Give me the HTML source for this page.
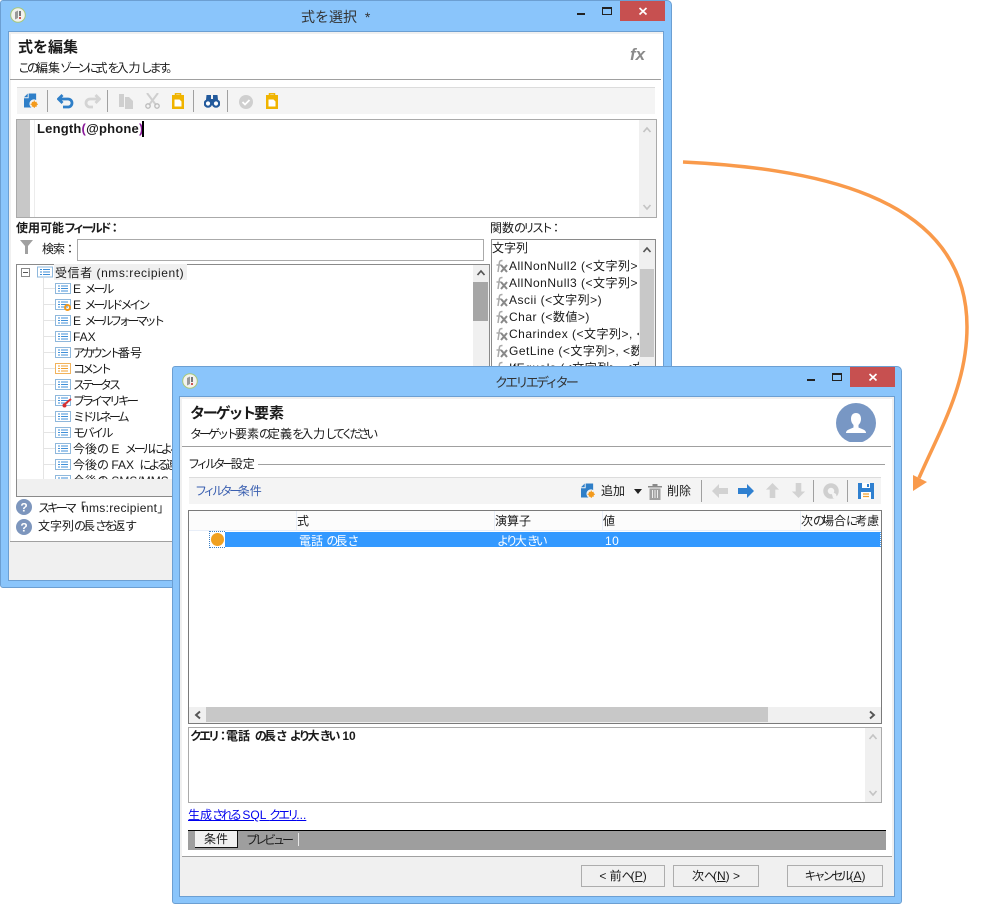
<!DOCTYPE html>
<html lang="ja"><head><meta charset="utf-8">
<style>
html,body{margin:0;padding:0;background:#fff;width:990px;height:914px;overflow:hidden}
body{position:relative;font-family:"Liberation Sans","Noto Sans CJK JP",sans-serif;font-size:12px;color:#1a1a1a}
div,svg{position:absolute;box-sizing:border-box}
.t{white-space:nowrap;line-height:16px;height:16px}
.b{font-weight:bold}
u{text-decoration:underline}
.win{background:#8ac5fb;border:1px solid #6c9fd2;border-radius:3px 5px 3px 3px}
.client{background:#fff;border:1px solid #6c9fd2;overflow:hidden}
.hr{height:1px;background:#a0a0a0}
.sep{width:1px;height:22px;background:#a0a0a0}
.tb{background:#f4f4f4;border-top:1px solid #dcdcdc}
.btn{background:#f0f0f0;border:1px solid #adadad;text-align:center;line-height:20px;height:22px;white-space:nowrap}
.k{letter-spacing:-3px}
.l{letter-spacing:.5px}
</style></head><body>
<svg width="0" height="0" style="position:absolute">
<defs>
<symbol id="li" viewBox="0 0 16 11"><rect x=".5" y=".5" width="15" height="10" fill="#fff" stroke="#8fb8dc"/><path d="M3 3h2M3 5.500h2M3 8h2M6 3h7M6 5.500h7M6 8h7" stroke="#3f8fd8" fill="none"/></symbol>
<symbol id="lo" viewBox="0 0 16 11"><rect x=".5" y=".5" width="15" height="10" fill="#fff" stroke="#f2b35c"/><path d="M3 3h2M3 5.500h2M3 8h2M6 3h7M6 5.500h7M6 8h7" stroke="#f0a030" fill="none"/></symbol>
<symbol id="add" viewBox="0 0 15 16"><path d="M5 0h8v7a4.500 4.500 0 0 0-5 8H0V5h5z" fill="#2f7fc8"/><path d="M4 0v4H0z" fill="#2f7fc8"/><circle cx="11" cy="11.500" r="3" fill="#f39a1c"/><path d="M11 7.500v8M7 11.500h8M8.500 9l5 5M13.500 9l-5 5" stroke="#f39a1c"/></symbol>
<symbol id="paste" viewBox="0 0 12 16"><rect y="2" width="12" height="14" fill="#f0b400"/><rect x="3.500" y=".8" width="5" height="4" fill="none" stroke="#f0b400" stroke-width="1.500"/><path d="M2.500 6.500h5l2 2v5h-7z" fill="#fff"/></symbol>
<symbol id="arr" viewBox="0 0 16 14"><path d="M0 7L7 0v4h9v6H7v4z" fill="currentColor"/></symbol>
<symbol id="q" viewBox="0 0 16 16"><circle cx="8" cy="8" r="8" fill="#7d96bd"/><text x="8" y="12.500" text-anchor="middle" font-family="Liberation Sans" font-weight="bold" font-size="12" fill="#fff">?</text></symbol>
<symbol id="fx" viewBox="0 0 14 14"><path d="M4 13L5.500 3c.2-1 1-1.500 3-1.500M2.500 6H7" stroke="#aaa" stroke-width="1.500" fill="none"/><path d="M7 6l6 7M13 6l-6 7" stroke="#888" stroke-width="2" fill="none"/></symbol>
<symbol id="appi" viewBox="0 0 16 16"><circle cx="8" cy="8" r="7.300" fill="#f2f2ee" stroke="#a8c878"/><path d="M5 5l3-1.500V11l-3 1.500z" fill="#999"/><path d="M9 4h2v5H9z" fill="#777"/><path d="M9 10h2v2H9z" fill="#c55"/></symbol>
</defs></svg>

<!-- WINDOW 1 -->
<div class="win" style="left:0;top:0;width:672px;height:588px"></div>
<div class="t" style="left:301px;top:9px;font-size:14px;color:#333;word-spacing:4px">式を選択 *</div>
<svg style="left:10px;top:7px" width="16" height="16"><use href="#appi"/></svg>
<div style="left:577px;top:13px;width:8px;height:2px;background:#222"></div>
<div style="left:602px;top:7px;width:10px;height:8px;border:1px solid #222;border-top-width:2px"></div>
<div style="left:620px;top:1px;width:45px;height:20px;background:#c75050"></div>
<svg style="left:638px;top:6px" width="10" height="10"><path d="M1.500 2l7 6.500M8.500 2l-7 6.500" stroke="#fff" stroke-width="1.700"/></svg>

<div class="client" style="left:8px;top:31px;width:656px;height:550px;background:#fff;border-color:#6c9fd2">
<div style="left:0;top:0;width:654px;height:2px;background:#f0f0f0"></div>
<div style="left:0;top:0;width:2px;height:548px;background:#f0f0f0"></div>
</div>
<div class="t b" style="left:18px;top:40px;font-size:15px">式を編集</div>
<div class="t" style="left:18px;top:60px"><span class="k">この</span>編集<span class="k">ゾーンに</span>式<span class="k">を</span>入力<span class="k">します。</span></div>
<div class="t" style="left:630px;top:47px;font-style:italic;font-weight:bold;font-size:17px;color:#8a8a8a">fx</div>
<div class="hr" style="left:10px;top:79px;width:651px"></div>

<div class="tb" style="left:17px;top:87px;width:638px;height:27px"></div>
<svg style="left:24px;top:93px" width="14" height="16"><use href="#add"/></svg>
<div class="sep" style="left:47px;top:90px"></div>
<svg style="left:57px;top:94px" width="18" height="15"><path d="M5.500 1L1.500 5l4 4M2 5h9a4 4 0 0 1 0 8H6" fill="none" stroke="#2f7fc8" stroke-width="2.800"/></svg>
<svg style="left:83px;top:94px" width="18" height="15"><path d="M12.500 1l4 4-4 4M16 5H7a4 4 0 0 0 0 8h3" fill="none" stroke="#d4d4d4" stroke-width="2.800"/></svg>
<div class="sep" style="left:107px;top:90px"></div>
<svg style="left:119px;top:94px" width="15" height="15"><path d="M0 0h5v13H0z" fill="#cfcfcf"/><path d="M6 3h4l4 4v8H6z" fill="#cfcfcf"/></svg>
<svg style="left:145px;top:93px" width="15" height="16"><path d="M2 0l9 12M13 0L4 12" stroke="#cfcfcf" stroke-width="2"/><circle cx="3" cy="13" r="2.200" fill="none" stroke="#bbb" stroke-width="1.300"/><circle cx="12" cy="13" r="2.200" fill="none" stroke="#bbb" stroke-width="1.300"/></svg>
<svg style="left:172px;top:93px" width="12" height="16"><use href="#paste"/></svg>
<div class="sep" style="left:193px;top:90px"></div>
<svg style="left:204px;top:95px" width="16" height="13"><path d="M2.500 0h4.500v5H2zM9 0h4.500l.5 5H9zM6 4h4v4H6z" fill="#235a9c"/><circle cx="4" cy="8.500" r="3.200" fill="#fff" stroke="#235a9c" stroke-width="2.200"/><circle cx="12" cy="8.500" r="3.200" fill="#fff" stroke="#235a9c" stroke-width="2.200"/></svg>
<div class="sep" style="left:227px;top:90px"></div>
<svg style="left:239px;top:95px" width="14" height="14"><circle cx="7" cy="7" r="7" fill="#cfcfcf"/><path d="M3.500 7l2.500 2.500 4.500-4.500" stroke="#fff" stroke-width="1.800" fill="none"/></svg>
<svg style="left:266px;top:93px" width="12" height="16"><use href="#paste"/></svg>

<div style="left:16px;top:119px;width:641px;height:99px;background:#fff;border:1px solid #aaa"></div>
<div style="left:17px;top:120px;width:13px;height:97px;background:#c8c8c8"></div>
<div style="left:34px;top:120px;width:1px;height:97px;background:#ececec"></div>
<div style="left:639px;top:120px;width:17px;height:97px;background:#f0f0f0"></div>
<svg style="left:642px;top:126px" width="10" height="8"><path d="M1.500 6l3.500-4 3.500 4" fill="none" stroke="#c4c4c4" stroke-width="1.700"/></svg>
<svg style="left:642px;top:203px" width="10" height="8"><path d="M1.500 2l3.500 4 3.500-4" fill="none" stroke="#c4c4c4" stroke-width="1.700"/></svg>
<div class="t b" style="left:37px;top:121px;font-size:13px;letter-spacing:.2px">Length<span style="color:#8a1a9a">(</span>@phone<span style="color:#8a1a9a">)</span></div>
<div style="left:142px;top:121px;width:2px;height:16px;background:#000"></div>

<div class="t b" style="left:16px;top:220px">使用可能<span class="k">フィールド：</span></div>
<div class="t" style="left:490px;top:220px">関数<span class="k">のリスト：</span></div>
<svg style="left:20px;top:240px" width="13" height="14"><path d="M0 0h13L8 6v8H5V6z" fill="#a0a0a0"/></svg>
<div class="t" style="left:42px;top:241px;letter-spacing:-1px">検索：</div>
<div style="left:77px;top:239px;width:407px;height:22px;background:#fff;border:1px solid #aaa"></div>

<!-- tree -->
<div style="left:16px;top:264px;width:474px;height:233px;background:#fff;border:1px solid #8a8a8a"></div>
<div style="left:473px;top:265px;width:16px;height:231px;background:#f0f0f0"></div>
<div style="left:473px;top:282px;width:15px;height:39px;background:#a6a6a6"></div>
<svg style="left:476px;top:269px" width="10" height="8"><path d="M1.500 6l3.500-4 3.500 4" fill="none" stroke="#555" stroke-width="1.700"/></svg>
<div style="left:17px;top:479px;width:472px;height:17px;background:#f0f0f0"></div>
<div style="left:43px;top:278px;width:1px;height:201px;background:#e4e4e4"></div>
<div style="left:21px;top:268px;width:9px;height:9px;border:1px solid #888;background:#fff"></div>
<div style="left:23px;top:272px;width:5px;height:1px;background:#555"></div>
<svg style="left:37px;top:266px" width="16" height="12"><use href="#li"/></svg>
<div style="left:54px;top:264px;width:133px;height:16px;background:#f0f0f0"></div>
<div class="t" style="left:55px;top:265px;letter-spacing:.55px">受信者 (nms:recipient)</div>

<div style="left:44px;top:288px;width:11px;height:1px;background:#e4e4e4"></div>
<div style="left:44px;top:304px;width:11px;height:1px;background:#e4e4e4"></div>
<div style="left:44px;top:320px;width:11px;height:1px;background:#e4e4e4"></div>
<div style="left:44px;top:336px;width:11px;height:1px;background:#e4e4e4"></div>
<div style="left:44px;top:352px;width:11px;height:1px;background:#e4e4e4"></div>
<div style="left:44px;top:368px;width:11px;height:1px;background:#e4e4e4"></div>
<div style="left:44px;top:384px;width:11px;height:1px;background:#e4e4e4"></div>
<div style="left:44px;top:400px;width:11px;height:1px;background:#e4e4e4"></div>
<div style="left:44px;top:416px;width:11px;height:1px;background:#e4e4e4"></div>
<div style="left:44px;top:432px;width:11px;height:1px;background:#e4e4e4"></div>
<div style="left:44px;top:448px;width:11px;height:1px;background:#e4e4e4"></div>
<div style="left:44px;top:464px;width:11px;height:1px;background:#e4e4e4"></div>

<svg style="left:55px;top:283px" width="16" height="11"><use href="#li"/></svg><div class="t" style="left:73px;top:281px">E <span class="k">メール</span></div>
<svg style="left:55px;top:299px" width="16" height="11"><use href="#li"/></svg><svg style="left:63px;top:303px" width="9" height="9"><circle cx="4.500" cy="4.500" r="2.500" fill="none" stroke="#f39a1c" stroke-width="2"/></svg><div class="t" style="left:73px;top:297px">E <span class="k">メールドメイン</span></div>
<svg style="left:55px;top:315px" width="16" height="11"><use href="#li"/></svg><div class="t" style="left:73px;top:313px">E <span style="letter-spacing:-3.400px">メールフォーマット</span></div>
<svg style="left:55px;top:331px" width="16" height="11"><use href="#li"/></svg><div class="t" style="left:73px;top:329px">FAX</div>
<svg style="left:55px;top:347px" width="16" height="11"><use href="#li"/></svg><div class="t" style="left:73px;top:345px"><span class="k">アカウント</span>番号</div>
<svg style="left:55px;top:363px" width="16" height="11"><use href="#lo"/></svg><div class="t k" style="left:73px;top:361px">コメント</div>
<svg style="left:55px;top:379px" width="16" height="11"><use href="#li"/></svg><div class="t k" style="left:73px;top:377px">ステータス</div>
<svg style="left:55px;top:395px" width="16" height="11"><use href="#li"/></svg><svg style="left:62px;top:398px" width="10" height="10"><path d="M9 1L3 6" stroke="#d83030" stroke-width="2"/><circle cx="2.500" cy="7.500" r="2" fill="#d83030"/></svg><div class="t k" style="left:73px;top:393px">プライマリキー</div>
<svg style="left:55px;top:411px" width="16" height="11"><use href="#li"/></svg><div class="t k" style="left:73px;top:409px">ミドルネーム</div>
<svg style="left:55px;top:427px" width="16" height="11"><use href="#li"/></svg><div class="t" style="left:73px;top:425px;letter-spacing:-2.500px">モバイル</div>
<svg style="left:55px;top:443px" width="16" height="11"><use href="#li"/></svg><div class="t" style="left:73px;top:441px;word-spacing:2px">今後<span class="k">の</span> E <span class="k">メールによる</span>連絡<span class="k">なし</span></div>
<svg style="left:55px;top:459px" width="16" height="11"><use href="#li"/></svg><div class="t" style="left:73px;top:457px;word-spacing:2px">今後<span class="k">の</span> FAX <span class="k">による</span>連絡<span class="k">なし</span></div>
<div style="left:55px;top:472px;width:118px;height:7px;overflow:hidden"><svg style="left:0;top:3px" width="16" height="11"><use href="#li"/></svg><div class="t" style="left:18px;top:1px;word-spacing:2px">今後<span class="k">の</span> SMS/MMS</div></div>

<!-- function list -->
<div style="left:491px;top:239px;width:165px;height:140px;background:#fff;border:1px solid #8a8a8a"></div>
<div style="left:639px;top:240px;width:16px;height:138px;background:#f0f0f0"></div>
<div style="left:640px;top:269px;width:14px;height:88px;background:#c8c8c8"></div>
<svg style="left:642px;top:246px" width="10" height="8"><path d="M1.500 6l3.500-4 3.500 4" fill="none" stroke="#555" stroke-width="1.700"/></svg>
<div style="left:492px;top:240px;width:147px;height:138px;overflow:hidden">
<div class="t" style="left:0;top:0">文字列</div>
<svg style="left:2px;top:19px" width="14" height="14"><use href="#fx"/></svg><div class="t l" style="left:17px;top:18px">AllNonNull2 (&lt;文字列&gt;, &lt;文字列&gt;)</div>
<svg style="left:2px;top:36px" width="14" height="14"><use href="#fx"/></svg><div class="t l" style="left:17px;top:35px">AllNonNull3 (&lt;文字列&gt;, &lt;文字列&gt;)</div>
<svg style="left:2px;top:53px" width="14" height="14"><use href="#fx"/></svg><div class="t l" style="left:17px;top:52px">Ascii (&lt;文字列&gt;)</div>
<svg style="left:2px;top:70px" width="14" height="14"><use href="#fx"/></svg><div class="t l" style="left:17px;top:69px">Char (&lt;数値&gt;)</div>
<svg style="left:2px;top:87px" width="14" height="14"><use href="#fx"/></svg><div class="t l" style="left:17px;top:86px">Charindex (&lt;文字列&gt;, &lt;文字列&gt;)</div>
<svg style="left:2px;top:104px" width="14" height="14"><use href="#fx"/></svg><div class="t l" style="left:17px;top:103px">GetLine (&lt;文字列&gt;, &lt;数値&gt;)</div>
<svg style="left:2px;top:121px" width="14" height="14"><use href="#fx"/></svg><div class="t l" style="left:17px;top:120px">IfEquals (&lt;文字列&gt;, &lt;文字列&gt;)</div>
</div>

<svg style="left:16px;top:499px" width="16" height="16"><use href="#q"/></svg>
<div class="t" style="left:38px;top:500px"><span class="k">スキーマ</span><span style="letter-spacing:-5px;margin-left:0">「</span><span style="letter-spacing:.3px;margin-left:1px">nms:recipient</span><span style="letter-spacing:-5px">」</span></div>
<svg style="left:16px;top:519px" width="16" height="16"><use href="#q"/></svg>
<div class="t" style="left:38px;top:518px">文字列<span class="k">の</span>長<span class="k">さを</span>返<span class="k">す</span></div>
<div class="hr" style="left:10px;top:541px;width:651px"></div>
<div style="left:9px;top:542px;width:654px;height:38px;background:#f0f0f0"></div>

<!-- ARROW -->
<svg style="left:0;top:0" width="990" height="914"><path d="M683 162C800 168 967 190 967 327C967 385 940 430 919 478" fill="none" stroke="#f99a4b" stroke-width="3.500"/><path d="M913 475L927 482L913 491z" fill="#f99a4b"/></svg>

<!-- WINDOW 2 -->
<div class="win" style="left:172px;top:366px;width:730px;height:538px"></div>
<div class="t" style="left:495px;top:375px;font-size:13px;color:#333;letter-spacing:-2.750px">クエリエディター</div>
<svg style="left:182px;top:373px" width="16" height="16"><use href="#appi"/></svg>
<div style="left:807px;top:379px;width:8px;height:2px;background:#222"></div>
<div style="left:832px;top:373px;width:10px;height:8px;border:1px solid #222;border-top-width:2px"></div>
<div style="left:850px;top:367px;width:45px;height:20px;background:#c75050"></div>
<svg style="left:868px;top:372px" width="10" height="10"><path d="M1.500 2l7 6.500M8.500 2l-7 6.500" stroke="#fff" stroke-width="1.700"/></svg>

<div class="client" style="left:179px;top:396px;width:716px;height:501px"></div>
<div style="left:180px;top:397px;width:714px;height:2px;background:#f0f0f0"></div>
<div style="left:180px;top:397px;width:2px;height:499px;background:#f0f0f0"></div>
<div style="left:892px;top:397px;width:2px;height:499px;background:#f0f0f0"></div>
<div class="t b" style="left:190px;top:406px;font-size:15px"><span style="letter-spacing:-2.200px">ターゲット</span>要素</div>
<div class="t" style="left:190px;top:426px"><span class="k">ターゲット</span>要素<span class="k">の</span>定義<span class="k">を</span>入力<span style="letter-spacing:-3.600px">してください</span></div>
<div style="left:836px;top:403px;width:40px;height:39px;overflow:hidden"><svg style="left:0;top:0" width="40" height="40"><circle cx="20" cy="20" r="20" fill="#7897c4"/><path d="M20 10c3.500 0 5 2.500 5 6 0 2.500-1 4.500-2.500 6v2.500c3 1.500 7 2 7.500 5v.5H10v-.5c.5-3 4.500-3.500 7.500-5V22c-1.500-1.500-2.500-3.500-2.500-6 0-3.500 1.500-6 5-6z" fill="#fff"/></svg></div>
<div class="hr" style="left:182px;top:446px;width:709px"></div>

<div class="hr" style="left:258px;top:464px;width:627px"></div>
<div class="t" style="left:188px;top:456px"><span style="letter-spacing:-3.400px">フィルター</span>設定</div>
<div class="tb" style="left:189px;top:477px;width:692px;height:27px"></div>
<div class="t" style="left:195px;top:483px;color:#3a5fb0"><span style="letter-spacing:-3.400px">フィルター</span>条件</div>
<svg style="left:581px;top:483px" width="14" height="16"><use href="#add"/></svg>
<div class="t" style="left:601px;top:483px">追加</div>
<svg style="left:634px;top:489px" width="8" height="5"><path d="M0 0h8L4 5z" fill="#222"/></svg>
<svg style="left:648px;top:483px" width="14" height="17"><path d="M0 3h14v1.500H0zM4.500 1h5v2h-5z" fill="#8a8a8a"/><path d="M1.500 5.500h11V17h-11z" fill="#a0a0a0"/><path d="M4.500 7v8M7 7v8M9.500 7v8" stroke="#eee"/></svg>
<div class="t" style="left:667px;top:483px">削除</div>
<div class="sep" style="left:701px;top:480px"></div>
<svg style="left:712px;top:484px;color:#d2d2d2" width="16" height="14"><use href="#arr"/></svg>
<svg style="left:738px;top:484px;color:#2f80d0;transform:scaleX(-1)" width="16" height="14"><use href="#arr"/></svg>
<svg style="left:765px;top:483px;color:#d2d2d2;transform:rotate(90deg)" width="15" height="15"><use href="#arr"/></svg>
<svg style="left:791px;top:483px;color:#d2d2d2;transform:rotate(-90deg)" width="15" height="15"><use href="#arr"/></svg>
<div class="sep" style="left:813px;top:480px"></div>
<svg style="left:823px;top:483px" width="16" height="16"><circle cx="8" cy="8" r="5.500" fill="none" stroke="#cfcfcf" stroke-width="4.500"/><path d="M8 8l5 3 1 4h-4z" fill="#f4f4f4"/></svg>
<div class="sep" style="left:847px;top:480px"></div>
<svg style="left:858px;top:483px" width="16" height="16"><path d="M0 0h16v16H0z" fill="#2f80d0"/><path d="M4 0h8v5H4z" fill="#fff"/><path d="M9 1h2v3H9z" fill="#2f80d0"/><path d="M3 9h10v7H3z" fill="#fff"/><path d="M5 11h6M5 13.500h6" stroke="#f0a030" stroke-width="1.300"/></svg>

<!-- table -->
<div style="left:188px;top:510px;width:694px;height:214px;background:#fff;border:1px solid #7a7a7a"></div>
<div style="left:189px;top:511px;width:692px;height:20px;background:#fcfcfc;border-bottom:1px solid #e8eef8"></div>
<div style="left:296px;top:511px;width:1px;height:19px;background:#e8eef8"></div>
<div style="left:494px;top:511px;width:1px;height:19px;background:#e8eef8"></div>
<div style="left:602px;top:511px;width:1px;height:19px;background:#e8eef8"></div>
<div style="left:800px;top:511px;width:1px;height:19px;background:#e8eef8"></div>
<div class="t" style="left:297px;top:513px">式</div>
<div class="t" style="left:495px;top:513px">演算子</div>
<div class="t" style="left:603px;top:513px">値</div>
<div class="t" style="left:801px;top:513px">次<span class="k">の</span>場合<span class="k">に</span>考慮</div>
<div style="left:209px;top:531px;width:672px;height:17px;border:1px dotted #3b7fc4"></div>
<div style="left:225px;top:532px;width:656px;height:15px;background:#3399ff"></div>
<div style="left:225px;top:531px;width:656px;height:17px;border-top:1px dotted #fff;border-bottom:1px dotted #fff;border-right:1px dotted #fff"></div>
<div style="left:211px;top:533px;width:13px;height:13px;border-radius:50%;background:#f0a020"></div>
<div class="t" style="left:299px;top:533px;color:#fff">電話 <span class="k">の</span>長<span class="k">さ</span></div>
<div class="t" style="left:497px;top:533px;color:#fff"><span class="k">より</span>大<span class="k">きい</span></div>
<div class="t" style="left:605px;top:533px;color:#fff;letter-spacing:.5px">10</div>
<div style="left:189px;top:707px;width:692px;height:16px;background:#f0f0f0"></div>
<div style="left:206px;top:707px;width:562px;height:15px;background:#c8c8c8"></div>
<svg style="left:193px;top:710px" width="9" height="10"><path d="M7 1.500L3 5l4 3.500" fill="none" stroke="#555" stroke-width="1.900"/></svg>
<svg style="left:868px;top:710px" width="9" height="10"><path d="M2 1.500L6 5 2 8.500" fill="none" stroke="#555" stroke-width="1.900"/></svg>

<!-- query -->
<div style="left:188px;top:727px;width:694px;height:76px;background:#fff;border:1px solid #aaa"></div>
<div style="left:865px;top:728px;width:16px;height:74px;background:#f0f0f0"></div>
<svg style="left:868px;top:733px" width="10" height="8"><path d="M1.500 6l3.500-4 3.500 4" fill="none" stroke="#c4c4c4" stroke-width="1.700"/></svg>
<svg style="left:868px;top:789px" width="10" height="8"><path d="M1.500 2l3.500 4 3.500-4" fill="none" stroke="#c4c4c4" stroke-width="1.700"/></svg>
<div class="t b" style="left:190px;top:728px;word-spacing:1.500px"><span class="k">クエリ：</span>電話 <span class="k">の</span>長<span class="k">さ</span> <span class="k">より</span>大<span class="k">きい</span> 10</div>
<div class="t" style="left:188px;top:807px;color:#0000ee;text-decoration:underline">生成<span class="k">される</span> SQL <span class="k">クエリ</span>...</div>

<!-- tabs -->
<div style="left:188px;top:830px;width:698px;height:20px;background:#9e9e9e;border-top:1px solid #000"></div>
<div style="left:195px;top:831px;width:43px;height:17px;background:#f0f0f0;border-right:1px solid #111;border-bottom:1px solid #111"></div>
<div class="t" style="left:204px;top:831px">条件</div>
<div class="t k" style="left:246px;top:832px">プレビュー</div>
<div style="left:298px;top:833px;width:1px;height:13px;background:#e8e8e8"></div>

<div class="hr" style="left:182px;top:856px;width:710px"></div>
<div style="left:180px;top:857px;width:714px;height:39px;background:#f0f0f0"></div>
<div class="btn" style="left:581px;top:865px;width:84px">&lt; 前<span class="k">へ</span>(<u>P</u>)</div>
<div class="btn" style="left:673px;top:865px;width:86px">次<span class="k">へ</span>(<u>N</u>) &gt;</div>
<div class="btn" style="left:787px;top:865px;width:96px"><span class="k">キャンセル</span>(<u>A</u>)</div>
</body></html>
